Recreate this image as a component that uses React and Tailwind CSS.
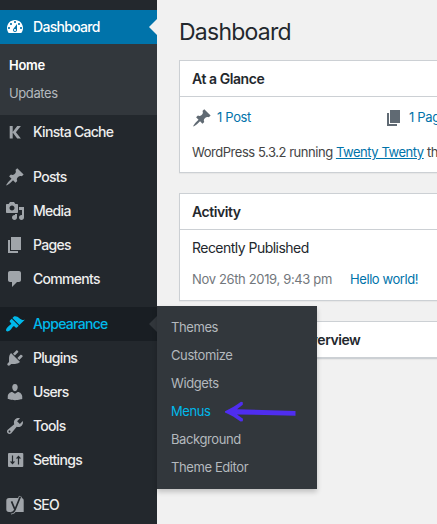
const PATHS = {
  dashboard: "M3.76 16h12.48c1.1-1.37 1.76-3.11 1.76-5 0-4.42-3.58-8-8-8s-8 3.58-8 8c0 1.89.66 3.63 1.76 5zM10 4c.55 0 1 .45 1 1s-.45 1-1 1-1-.45-1-1 .45-1 1-1zM6 6c.55 0 1 .45 1 1s-.45 1-1 1-1-.45-1-1 .45-1 1-1zm8 0c.55 0 1 .45 1 1s-.45 1-1 1-1-.45-1-1 .45-1 1-1zm-5.37 5.55L12 7v6c0 1.1-.9 2-2 2s-2-.9-2-2c0-.57.24-1.08.63-1.45zM4 10c.55 0 1 .45 1 1s-.45 1-1 1-1-.45-1-1 .45-1 1-1zm12 0c.55 0 1 .45 1 1s-.45 1-1 1-1-.45-1-1 .45-1 1-1zm-5 3c0-.55-.45-1-1-1s-1 .45-1 1 .45 1 1 1 1-.45 1-1z",
  post: "M10.44 3.02l1.82-1.82 6.36 6.35-1.83 1.82c-1.05-.68-2.48-.57-3.41.36l-.75.75c-.92.93-1.04 2.35-.35 3.41l-1.83 1.82-2.41-2.41-2.8 2.79c-.42.42-3.38 2.71-3.8 2.29s1.86-3.39 2.28-3.81l2.79-2.79L4.1 9.36l1.83-1.82c1.05.69 2.48.57 3.4-.36l.75-.75c.93-.92 1.05-2.35.36-3.41z",
  media: "M13 11V4c0-.55-.45-1-1-1h-1.67L9 1H5L3.67 3H2c-.55 0-1 .45-1 1v7c0 .55.45 1 1 1h10c.55 0 1-.45 1-1zM7 4.5c1.38 0 2.5 1.12 2.5 2.5S8.38 9.5 7 9.5 4.5 8.38 4.5 7 5.62 4.5 7 4.5zM14 6h5v10.5c0 1.38-1.12 2.5-2.5 2.5S14 17.88 14 16.5s1.12-2.5 2.5-2.5c.17 0 .34.02.5.05V9h-3V6zm-4 8.05V13h2v3.5c0 1.38-1.12 2.5-2.5 2.5S7 17.88 7 16.5 8.12 14 9.5 14c.17 0 .34.02.5.05z",
  page: "M6 15V2h10v13H6zm-1 1h8v2H3V5h2v11z",
  comments: "M5 2h9c1.1 0 2 .9 2 2v7c0 1.1-.9 2-2 2h-2l-5 5v-5H5c-1.1 0-2-.9-2-2V4c0-1.1.9-2 2-2z",
  appearance: "M14.48 11.06L7.41 3.99l1.5-1.5c.5-.56 2.3-.47 3.51.32 1.21.8 1.43 1.28 2.91 2.1 1.18.64 2.45 1.26 4.45.85zm-.71.71L6.7 4.7 4.93 6.47c-.39.39-.39 1.02 0 1.41l1.06 1.06c.39.39.39 1.03 0 1.42-.6.6-1.43 1.11-2.21 1.69-.35.26-.7.53-1.01.84C1.43 14.23.4 16.08 1.4 17.07c.99 1 2.84-.03 4.18-1.36.31-.31.58-.66.85-1.02.57-.78 1.08-1.61 1.69-2.21.39-.39 1.02-.39 1.41 0l1.06 1.06c.39.39 1.02.39 1.41 0z",
  plugins: "M13.11 4.36L9.87 7.6 8 5.73l3.24-3.24c.35-.34 1.05-.2 1.56.32.52.51.66 1.21.31 1.55zm-8 1.77l.91-1.12 9.01 9.01-1.19.84c-.71.71-2.63 1.16-3.82 1.16H6.14L4.9 17.26c-.59.59-1.54.59-2.12 0-.59-.58-.59-1.53 0-2.12l1.24-1.24v-3.88c0-1.13.4-3.19 1.09-3.89zm7.26 3.97l3.24-3.24c.34-.35 1.04-.21 1.55.31.52.51.66 1.21.31 1.55l-3.24 3.25z",
  users: "M10 9.25c-2.27 0-2.73-3.44-2.73-3.44C7 4.02 7.82 2 9.97 2c2.16 0 2.98 2.02 2.71 3.81 0 0-.41 3.44-2.68 3.44zm0 2.57L12.72 10c2.39 0 4.52 2.33 4.52 4.53v2.49s-3.65 1.13-7.24 1.13c-3.65 0-7.24-1.13-7.24-1.13v-2.49c0-2.25 1.94-4.48 4.47-4.48z",
  tools: "M16.68 9.77c-1.34 1.34-3.3 1.67-4.95.99l-5.41 6.52c-.99.99-2.59.99-3.58 0s-.99-2.59 0-3.57l6.52-5.42c-.68-1.65-.35-3.61.99-4.95 1.28-1.28 3.12-1.62 4.72-1.06l-2.89 2.89 2.82 2.82 2.86-2.87c.53 1.58.18 3.39-1.08 4.65zM3.81 16.21c.4.39 1.04.39 1.43 0 .4-.4.4-1.04 0-1.43-.39-.4-1.03-.4-1.43 0-.39.39-.39 1.03 0 1.43z",
};

function Icon({ name, className = "" }) {
  const cls = `h-5 w-5 shrink-0 ${className}`;
  if (name === "kinsta") {
    return (
      <svg viewBox="0 0 20 20" className={cls} fill="currentColor">
        <path d="M4.700 4h3v12.500h-3zM12.200 4h3.700l-5 6.200 5 6.300h-3.700L7.500 10.200z" />
      </svg>
    );
  }
  if (name === "settings") {
    return (
      <svg viewBox="0 0 20 20" className={cls}>
        <rect x="3" y="3" width="15.300" height="14" rx="1" fill="currentColor" />
        <path d="M7.500 5.500V13M13.500 7v7.500" stroke="#23282d" strokeWidth="1.200" fill="none" />
        <path d="M4.800 11.500h5.400l-2.700 3zM10.800 8.500h5.400l-2.700-3z" fill="#23282d" />
      </svg>
    );
  }
  if (name === "seo") {
    return (
      <svg viewBox="0 0 20 20" className={cls} fill="none">
        <path
          d="M4 3h12.200A2.500 2.500 0 0 1 18.700 5.500V17H4a2.700 2.700 0 0 1-2.700-2.700V5.700A2.700 2.700 0 0 1 4 3z"
          fill="currentColor"
        />
        <path d="M15.500 1.300l-5.300 13.200c-.8 2.100-1.900 3.300-4.300 3.500" stroke="currentColor" strokeWidth="3.200" />
        <path d="M6.500 6.300l3.200 7.700M15.300 1.800l-5.200 12.700c-.8 2-1.800 3.100-4 3.300" stroke="#23282d" strokeWidth="1.700" />
      </svg>
    );
  }
  return (
    <svg viewBox="0 0 20 20" className={cls} fill="currentColor">
      <path d={PATHS[name]} />
    </svg>
  );
}

function MenuItem({ icon, label, state }) {
  const tone =
    state === "current" ? "bg-[#0073aa] text-white" : state === "open" ? "bg-[#191e23] text-[#00b9eb]" : "text-[#eee]";
  const iconTone = state ? "" : "text-[#a0a5aa]";
  return (
    <a className={`relative flex h-[34px] items-center gap-2 pl-[5px] text-[14px] font-medium whitespace-nowrap ${tone}`}>
      <Icon name={icon} className={iconTone} />
      <span className="pb-px leading-[20px] tracking-[-0.7px]">{label}</span>
      {state && (
        <span
          className={`absolute top-[9px] right-0 border-y-8 border-r-8 border-y-transparent ${
            state === "current" ? "border-r-[#f1f1f1]" : "border-r-[#32373c]"
          }`}
        />
      )}
    </a>
  );
}

const FLYOUT = ["Themes", "Customize", "Widgets", "Menus", "Background", "Theme Editor"];

function Flyout() {
  return (
    <div className="absolute top-[306px] left-[157px] flex h-[183px] w-[160px] flex-col bg-[#32373c] pt-2 pl-[14px] text-[13px] tracking-[-0.4px] text-[#b4b9be] shadow-[0_3px_5px_rgba(0,0,0,0.2)]">
      {FLYOUT.map((t) => (
        <a key={t} className={`flex h-7 items-center whitespace-nowrap ${t === "Menus" ? "text-[#00b9eb]" : ""}`}>
          {t}
        </a>
      ))}
      <svg className="absolute top-[94px] left-[66px]" width="76" height="24" viewBox="0 0 76 24" fill="#4f2df0">
        <path d="M2 11.200C8 8.500 13.500 5 18 1.800L19.800 2.300V4.800L14 9.200L72.500 11V15.700L14 14.400L20 18.700L19.800 21.300L17.500 21.600C12.500 18 8 15 2 12.600z" />
      </svg>
    </div>
  );
}

function Card({ title, className = "", children }) {
  return (
    <section className={`w-[400px] border border-[#ccd0d4] bg-white shadow-[0_1px_1px_rgba(0,0,0,0.04)] ${className}`}>
      <h2 className="flex h-[36px] items-center border-b border-[#ccd0d4] pl-3 text-[14px] font-semibold text-[#23282d]">
        <span className="tracking-[-0.44px]">{title}</span>
      </h2>
      {children}
    </section>
  );
}

export default function App() {
  return (
    <div className="relative flex h-[524px] w-[437px] overflow-hidden bg-[#f1f1f1] font-['Inter','Liberation_Sans',sans-serif]">
      <nav className="flex w-[157px] shrink-0 flex-col bg-[#23282d] pt-[10px]">
        <MenuItem icon="dashboard" label="Dashboard" state="current" />
        <div className="flex h-[71px] flex-col bg-[#32373c] pt-2 pl-[9px] text-[13px]">
          <a className="flex h-7 items-center font-semibold tracking-[-0.25px] text-white">Home</a>
          <a className="flex h-7 items-center tracking-[-0.38px] text-[#b4b9be]">Updates</a>
        </div>
        <MenuItem icon="kinsta" label="Kinsta Cache" />
        <div className="mt-[11px]">
          <MenuItem icon="post" label="Posts" />
          <MenuItem icon="media" label="Media" />
          <MenuItem icon="page" label="Pages" />
          <MenuItem icon="comments" label="Comments" />
        </div>
        <div className="mt-[11px]">
          <MenuItem icon="appearance" label="Appearance" state="open" />
          <MenuItem icon="plugins" label="Plugins" />
          <MenuItem icon="users" label="Users" />
          <MenuItem icon="tools" label="Tools" />
          <MenuItem icon="settings" label="Settings" />
        </div>
        <div className="mt-[11px]">
          <MenuItem icon="seo" label="SEO" />
        </div>
      </nav>

      <main className="min-w-0 flex-1 overflow-hidden pl-[22px] whitespace-nowrap">
        <h1 className="mt-[17px] mb-[13px] text-[23px] leading-[30px] tracking-[-0.75px] text-[#23282d]">Dashboard</h1>
        <Card title="At a Glance" className="h-[113px]">
          <div className="flex h-[42px] items-center pl-3 text-[13px] tracking-[-0.35px] text-[#0073aa]">
            <div className="flex w-[192px] items-center gap-[5px]">
              <Icon name="post" className="text-[#606a73]" />
              <span>1 Post</span>
            </div>
            <div className="flex items-center gap-[5px]">
              <Icon name="page" className="text-[#606a73]" />
              <span>1 Page</span>
            </div>
          </div>
          <p className="pt-[3px] pl-3 text-[13px] leading-[20px] tracking-[-0.46px] text-[#444]">
            WordPress 5.3.2 running <a className="text-[#0073aa] underline">Twenty Twenty</a> theme.
          </p>
        </Card>
        <Card title="Activity" className="mt-5 h-[108px]">
          <h3 className="pt-2 pl-3 text-[14px] leading-[20px] tracking-[-0.53px] text-[#23282d]">Recently Published</h3>
          <div className="flex pt-[11px] pl-3 text-[13px] leading-[20px]">
            <span className="w-[158px] tracking-[-0.35px] text-[#72777c]">Nov 26th 2019, 9:43 pm</span>
            <a className="tracking-[-0.42px] text-[#0073aa]">Hello world!</a>
          </div>
        </Card>
        <Card title="Yoast SEO Posts Overview" className="mt-5 h-[38px]" />
      </main>

      <Flyout />
    </div>
  );
}
